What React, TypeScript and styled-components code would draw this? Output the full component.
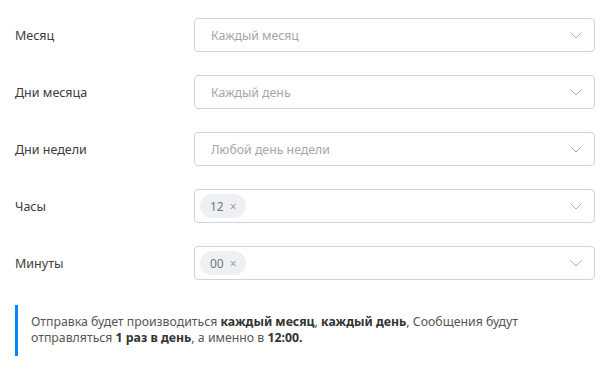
import React from "react";
import styled, { createGlobalStyle } from "styled-components";

const GlobalStyle = createGlobalStyle`
  body {
    margin: 0;
    background: #fff;
    font-family: "Noto Sans", "Open Sans", Arial, sans-serif;
    color: #333;
  }
`;

const Page = styled.div`
  width: 608px;
  padding: 18px 13px 0 15px;
  box-sizing: border-box;
`;

const Form = styled.div`
  display: flex;
  flex-direction: column;
  gap: 23px;
`;

const Row = styled.div`
  display: grid;
  grid-template-columns: 179px 401px;
  align-items: center;
`;

const Label = styled.div`
  font-size: 12.5px;
  color: #3c3c3c;
`;

const SelectBox = styled.div`
  height: 34px;
  box-sizing: border-box;
  border: 1px solid #c9d4de;
  border-radius: 4px;
  display: flex;
  align-items: center;
  padding: 0 12px 0 5px;
`;

const Value = styled.div<{ $placeholder?: boolean }>`
  flex: 1;
  font-size: 12.3px;
  padding-left: 11px;
  color: ${(p) => (p.$placeholder ? "#a3a6ab" : "#333")};
`;

const Tags = styled.div`
  flex: 1;
  display: flex;
  gap: 4px;
`;

const Tag = styled.span`
  display: inline-flex;
  align-items: center;
  gap: 6px;
  height: 24px;
  padding: 0 9px 0 10px;
  border-radius: 12px;
  background: #eef0f4;
  font-size: 12px;
  color: #707580;
`;

const TagClose = styled.span`
  font-size: 12px;
  color: #9aa0a8;
`;

const Chevron = () => (
  <svg width="12" height="7" viewBox="0 0 12 7" fill="none">
    <path d="M0.5 0.5L6 6L11.5 0.5" stroke="#a8afb7" strokeWidth="1" />
  </svg>
);

const Note = styled.div`
  margin-top: 25px;
  border-left: 3px solid #0d84ff;
  padding: 9px 0 10px 13px;
  font-size: 12.3px;
  line-height: 16px;
  color: #555;
  b {
    color: #333;
    font-weight: 700;
  }
`;

const rows: { label: string; placeholder?: string; tags?: string[] }[] = [
  { label: "Месяц", placeholder: "Каждый месяц" },
  { label: "Дни месяца", placeholder: "Каждый день" },
  { label: "Дни недели", placeholder: "Любой день недели" },
  { label: "Часы", tags: ["12"] },
  { label: "Минуты", tags: ["00"] },
];

const App = () => (
  <>
    <GlobalStyle />
    <Page>
      <Form>
        {rows.map((r) => (
          <Row key={r.label}>
            <Label>{r.label}</Label>
            <SelectBox>
              {r.tags ? (
                <Tags>
                  {r.tags.map((t) => (
                    <Tag key={t}>
                      {t}
                      <TagClose>×</TagClose>
                    </Tag>
                  ))}
                </Tags>
              ) : (
                <Value $placeholder>{r.placeholder}</Value>
              )}
              <Chevron />
            </SelectBox>
          </Row>
        ))}
      </Form>
      <Note>
        Отправка будет производиться <b>каждый месяц</b>, <b>каждый день</b>, Сообщения будут
        <br />
        отправляться <b>1 раз в день</b>, а именно в <b>12:00.</b>
      </Note>
    </Page>
  </>
);

export default App;
